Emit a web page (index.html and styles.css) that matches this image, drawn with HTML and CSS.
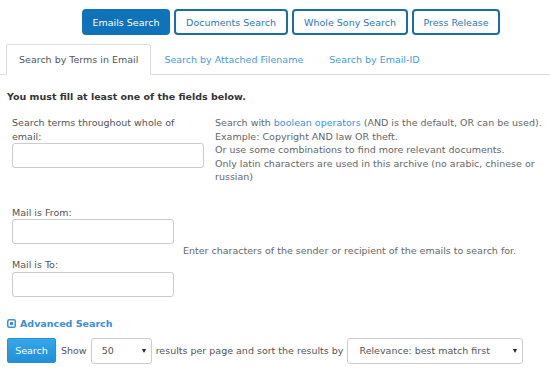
FILE: index.html
```html
<!DOCTYPE html>
<html lang="en">
<head>
  <meta charset="UTF-8">
  <title>Search Emails</title>
  <link rel="stylesheet" href="styles.css">
</head>
<body>

  <div class="nav-botones">
    <a class="boton activo b-emails" href="#">Emails Search</a>
    <a class="boton b-docs" href="#">Documents Search</a>
    <a class="boton b-sony" href="#">Whole Sony Search</a>
    <a class="boton b-prensa" href="#">Press Release</a>
  </div>

  <ul class="pestanas">
    <li class="pestana activa">Search by Terms in Email</li>
    <li class="pestana">Search by Attached Filename</li>
    <li class="pestana">Search by Email-ID</li>
  </ul>

  <form class="formulario">
    <h4 class="aviso">You must fill at least one of the fields below.</h4>

    <div class="fila">
      <div class="campo">
        <label for="terminos">Search terms throughout whole of email:</label>
        <input type="text" id="terminos" class="entrada ancha">
      </div>
      <div class="ayuda">
        Search with <a href="#">boolean operators</a> (AND is the default, OR can be used).<br>
        Example: Copyright AND law OR theft.<br>
        Or use some combinations to find more relevant documents.<br>
        Only latin characters are used in this archive (no arabic, chinese or russian)
      </div>
    </div>

    <div class="fila fila-correo">
      <div class="campo">
        <label for="desde">Mail is From:</label>
        <input type="text" id="desde" class="entrada">
        <label for="para" class="label-para">Mail is To:</label>
        <input type="text" id="para" class="entrada">
      </div>
      <div class="ayuda ayuda-centro">
        Enter characters of the sender or recipient of the emails to search for.
      </div>
    </div>

    <a class="avanzada" href="#">
      <svg width="9" height="9" viewBox="0 0 9 9">
        <rect x="0.75" y="0.75" width="7.5" height="7.5" rx="1.5" fill="none" stroke="#3d8fd6" stroke-width="1.5"/>
        <rect x="3" y="3" width="3" height="3" fill="#3d8fd6"/>
      </svg>
      Advanced Search
    </a>

    <div class="barra">
      <button type="submit" class="buscar">Search</button>
      <span>Show</span>
      <div class="selector corto">
        <select>
          <option>50</option>
          <option>100</option>
          <option>200</option>
        </select>
      </div>
      <span>results per page and sort the results by</span>
      <div class="selector largo">
        <select>
          <option>Relevance: best match first</option>
          <option>Date: newest first</option>
        </select>
      </div>
    </div>
  </form>

</body>
</html>
```

FILE: styles.css
```css
/* --- General --- */
body {
  font-family: "DejaVu Sans", Verdana, sans-serif;
  font-size: 9.5px;
  color: #555;
  background: #fff;
  margin: 0;
}

a {
  color: #3d8fd6;
  text-decoration: none;
}

/* --- Botones superiores --- */
.nav-botones {
  display: flex;
  justify-content: center;
  gap: 4px;
  padding: 9px 0 0 32px;
}

.boton {
  display: flex;
  align-items: center;
  justify-content: center;
  height: 26px;
  box-sizing: border-box;
  border: 2px solid #1c6ca8;
  border-radius: 4px;
  color: #2b78b8;
}

.boton.activo {
  background: #0f73ba;
  border-color: #0f73ba;
  color: #fff;
}

.b-emails { width: 88px; }
.b-docs { width: 114px; }
.b-sony { width: 116px; }
.b-prensa { width: 88px; }

/* --- Pestañas --- */
.pestanas {
  display: flex;
  list-style: none;
  margin: 9px 0 0;
  padding: 0 0 0 6px;
  border-bottom: 1px solid #ddd;
}

.pestana {
  padding: 0 12px;
  height: 29px;
  line-height: 29px;
  color: #4a9ad8;
  border: 1px solid transparent;
  border-bottom: none;
  margin-bottom: -1px;
}

.pestana.activa {
  color: #555;
  background: #fff;
  border-color: #ddd;
  border-radius: 3px 3px 0 0;
  height: 30px;
}

/* --- Formulario --- */
.formulario {
  padding: 0 7px;
}

.aviso {
  font-size: 9.5px;
  color: #333;
  margin: 16px 0 14px;
}

.fila {
  display: flex;
  line-height: 13.5px;
}

.campo {
  width: 203px;
  padding-left: 5px;
  box-sizing: border-box;
}

.campo label {
  display: block;
  padding-right: 10px;
}

.entrada {
  display: block;
  width: 162px;
  height: 25px;
  box-sizing: border-box;
  border: 1px solid #ccc;
  border-radius: 3px;
  margin: 0;
}

.entrada.ancha {
  width: 192px;
}

.ayuda {
  flex: 1;
  padding-left: 5px;
  color: #666;
}

.fila-correo {
  margin-top: 22px;
}

.fila-correo .campo {
  width: 176px;
}

.label-para {
  margin-top: 14px;
}

.ayuda-centro {
  align-self: center;
  padding-left: 0;
}

.avanzada {
  display: flex;
  align-items: center;
  gap: 4px;
  margin-top: 21px;
  font-weight: bold;
}

/* --- Barra inferior --- */
.barra {
  display: flex;
  align-items: center;
  gap: 4px;
  margin-top: 9px;
}

.buscar {
  font-family: inherit;
  font-size: 9.5px;
  color: #fff;
  background: linear-gradient(#35a6ea, #2090d8);
  border: 1px solid #2a8fd3;
  border-radius: 2px;
  width: 49px;
  height: 25px;
  padding: 0;
  margin-right: 1px;
}

.selector {
  position: relative;
}

.selector select {
  appearance: none;
  font-family: inherit;
  font-size: 9.5px;
  color: #555;
  background: #fff;
  border: 1px solid #ccc;
  border-radius: 3px;
  height: 26px;
  padding: 0 10px;
}

.selector::after {
  content: "";
  position: absolute;
  right: 6px;
  top: 11px;
  border-left: 2.5px solid transparent;
  border-right: 2.5px solid transparent;
  border-top: 4px solid #222;
  pointer-events: none;
}

.corto select {
  width: 61px;
}

.largo select {
  width: 176px;
  padding-left: 11px;
}
```
